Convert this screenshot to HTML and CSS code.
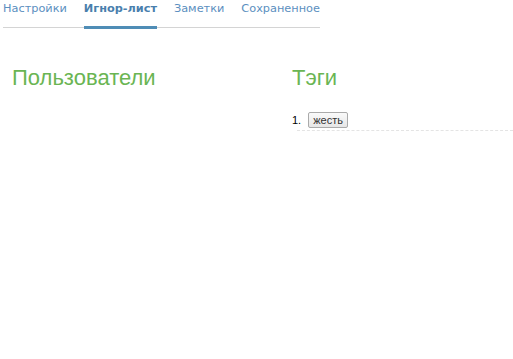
FILE: index.html
```html
<!DOCTYPE html>
<html lang="ru">
<head>
    <meta charset="UTF-8">
    <title>Игнор-лист</title>
    <link rel="stylesheet" href="styles.css">
</head>
<body>
    <!-- Tabs -->
    <ul class="tabs">
        <li><a href="#">Настройки</a></li>
        <li class="active"><a href="#">Игнор-лист</a></li>
        <li><a href="#">Заметки</a></li>
        <li><a href="#">Сохраненное</a></li>
    </ul>

    <div class="columns">
        <div class="column">
            <h2>Пользователи</h2>
        </div>
        <div class="column">
            <h2>Тэги</h2>
            <ol class="ignore-list">
                <li><button class="tag">жесть</button></li>
            </ol>
        </div>
    </div>
</body>
</html>
```

FILE: styles.css
```css
* {
    margin: 0;
    padding: 0;
    box-sizing: border-box;
}

body {
    font-family: "DejaVu Sans", Verdana, sans-serif;
    background-color: #fff;
    color: #333;
    overflow: hidden;
}

.tabs {
    display: flex;
    list-style: none;
    width: 317px;
    margin-left: 3px;
    border-bottom: 1px solid #d4d4d4;
    white-space: nowrap;
}

.tabs li {
    margin-right: 17px;
    margin-bottom: -2px;
    border-bottom: 3px solid transparent;
}

.tabs li:last-child {
    margin-right: 0;
}

.tabs a {
    display: block;
    padding: 2px 0 11px;
    font-size: 11.3px;
    color: #5b8fc0;
    text-decoration: none;
}

.tabs .active {
    border-bottom-color: #4f8db6;
}

.tabs .active a {
    font-weight: bold;
    color: #4a7fad;
}

.columns {
    display: flex;
    padding-top: 37px;
}

.column {
    flex: 0 0 280px;
    padding-left: 12px;
}

.column + .column {
    flex: 1 1 auto;
    min-width: 0;
}

.column h2 {
    font-family: "Liberation Sans", Arial, sans-serif;
    font-weight: normal;
    font-size: 22px;
    color: #6ab553;
    margin-bottom: 21px;
}

.ignore-list {
    list-style-position: inside;
    font-family: "Liberation Sans", Arial, sans-serif;
    font-size: 11px;
    color: #000;
}

.ignore-list li {
    border-bottom: 1px dashed #e4e4e4;
    margin-left: 5px;
    text-indent: -5px;
    padding-bottom: 2px;
}

.tag {
    font-family: "Liberation Sans", Arial, sans-serif;
    font-size: 11px;
    text-indent: 0;
    margin-left: 4px;
    color: #333;
    padding: 1px 4px;
    background: linear-gradient(#fafafa, #e6e6e6);
    border: 1px solid #aaa;
    border-radius: 2px;
}
```
